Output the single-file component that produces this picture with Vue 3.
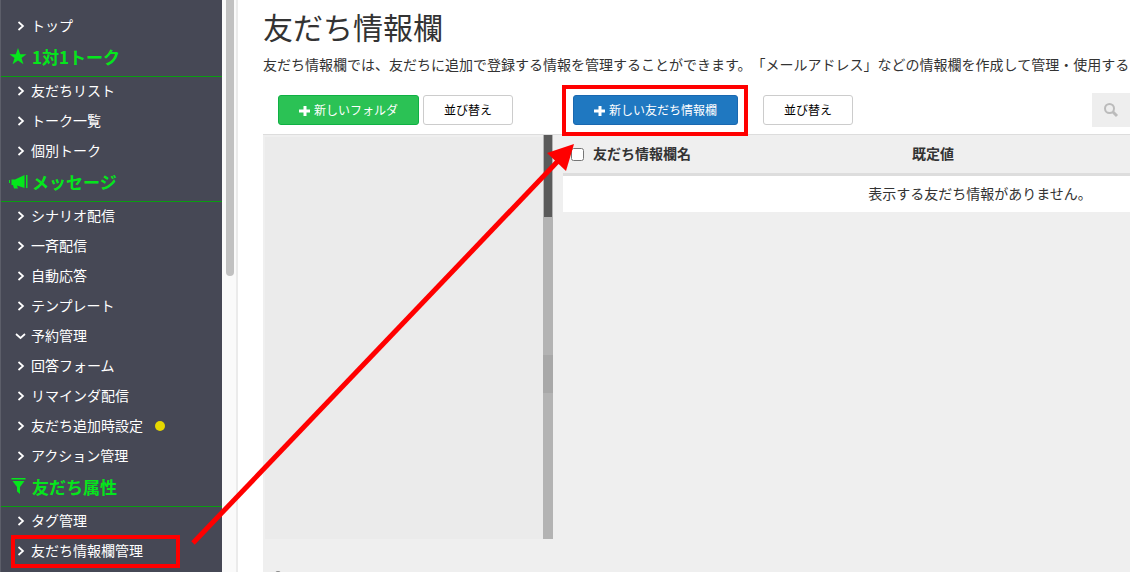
<script setup>
const groups = [
  { items: [{ label: 'トップ' }] },
  {
    title: '1対1トーク',
    icon: 'star',
    items: [{ label: '友だちリスト' }, { label: 'トーク一覧' }, { label: '個別トーク' }],
  },
  {
    title: 'メッセージ',
    icon: 'horn',
    items: [
      { label: 'シナリオ配信' },
      { label: '一斉配信' },
      { label: '自動応答' },
      { label: 'テンプレート' },
      { label: '予約管理', open: true },
      { label: '回答フォーム' },
      { label: 'リマインダ配信' },
      { label: '友だち追加時設定', dot: true },
      { label: 'アクション管理' },
    ],
  },
  {
    title: '友だち属性',
    icon: 'filter',
    items: [{ label: 'タグ管理' }, { label: '友だち情報欄管理', marked: true }],
  },
]
</script>

<template>
  <div class="page">
    <nav class="sidebar">
      <section v-for="(group, i) in groups" :key="i">
        <h2 v-if="group.title" class="group-title">
          <svg v-if="group.icon === 'star'" width="19" height="18" viewBox="0 0 19 18">
            <path fill="currentColor" d="M9 0l2.200 6.200H17.500l-5 3.900 1.900 6.100L9 12.500l-5.400 3.700 1.900-6.100-5-3.900h6.300z" />
          </svg>
          <svg v-else-if="group.icon === 'horn'" width="19" height="18" viewBox="0 0 19 18">
            <path fill="currentColor" d="M0 7h1v3H0zM2.500 6.500H6L15.500 2v13L8 12.500l1 3H5L4 12H2.500zM17 2h1.500v13H17z" />
          </svg>
          <svg v-else width="19" height="18" viewBox="0 0 19 18">
            <path fill="currentColor" d="M2.500 0h14v1.500h-14zM3.500 3h12L11 9v7L8 13.500V9z" />
          </svg>
          <span>{{ group.title }}</span>
        </h2>
        <ul>
          <li v-for="item in group.items" :key="item.label" :class="{ marked: item.marked }">
            <a href="#">
              <svg width="12" height="12" viewBox="0 0 12 12" fill="none" stroke="currentColor" stroke-width="1.700">
                <path v-if="item.open" d="M2 4l4.500 4L11 4" />
                <path v-else d="M4.500 2l4.500 4-4.500 4" />
              </svg>
              <span>{{ item.label }}</span>
              <i v-if="item.dot" class="dot"></i>
            </a>
          </li>
        </ul>
      </section>
    </nav>
    <div class="side-scroll"><div class="side-thumb"></div></div>

    <main>
      <h1>友だち情報欄</h1>
      <p class="lead">友だち情報欄では、友だちに追加で登録する情報を管理することができます。「メールアドレス」などの情報欄を作成して管理・使用することができます。</p>
      <div class="columns">
        <section class="folders">
          <div class="toolbar">
            <button class="btn green" type="button">
              <svg width="12" height="12" viewBox="0 0 12 12"><path fill="currentColor" d="M4.500 1h3v3.500H11v3H7.500V11h-3V7.500H0v-3h4.500z" /></svg>
              新しいフォルダ
            </button>
            <button class="btn" type="button">並び替え</button>
          </div>
          <div class="folder-list">
            <div class="folder-body"></div>
            <div class="folder-scroll"><div class="folder-thumb"></div><div class="folder-grip"></div></div>
          </div>
          <div class="folder-foot"><i></i></div>
        </section>

        <section class="fields">
          <div class="toolbar">
            <span class="highlight">
              <button class="btn blue" type="button">
                <svg width="12" height="12" viewBox="0 0 12 12"><path fill="currentColor" d="M4.500 1h3v3.500H11v3H7.500V11h-3V7.500H0v-3h4.500z" /></svg>
                新しい友だち情報欄
              </button>
            </span>
            <button class="btn" type="button">並び替え</button>
            <button class="search" type="button" aria-label="検索">
              <svg width="16" height="16" viewBox="0 0 16 16" fill="none" stroke="currentColor">
                <circle cx="6.500" cy="6.500" r="4.500" stroke-width="2" />
                <path d="M10 10l4 4" stroke-width="3" />
              </svg>
            </button>
          </div>
          <div class="table-area">
            <table>
              <thead>
                <tr>
                  <th class="name"><label><input type="checkbox" />友だち情報欄名</label></th>
                  <th>既定値</th>
                </tr>
              </thead>
              <tbody>
                <tr><td colspan="2">表示する友だち情報がありません。</td></tr>
              </tbody>
            </table>
          </div>
        </section>
      </div>
    </main>

    <svg class="arrow" width="400" height="410" viewBox="0 0 400 410">
      <path d="M13 403L378 21" stroke="#f00" stroke-width="5" />
      <path d="M394 4L367 13L386 31z" fill="#f00" />
    </svg>
  </div>
</template>

<style>
body {
  overflow: hidden;
}
</style>

<style scoped>
*,
*::after {
  box-sizing: border-box;
}
.page {
  position: relative;
  display: flex;
  height: 100vh;
  overflow: hidden;
  background: #fff;
  color: #333;
  font: 14px/20px "Liberation Sans", "Noto Sans CJK JP", sans-serif;
  text-spacing-trim: space-all;
}
.sidebar {
  flex: 0 0 222px;
  padding-top: 11px;
  background: #464855;
  border-left: 1px solid #5c5e69;
  overflow: hidden;
}
ul {
  margin: 0;
  padding: 0;
  list-style: none;
}
.group-title {
  display: flex;
  align-items: center;
  gap: 4px;
  height: 36px;
  margin: 0 0 -1px;
  padding: 0 0 4px 8px;
  border-bottom: 1px solid #0a9c12;
  color: #05e61c;
  font-family: "Noto Sans CJK JP", sans-serif;
  font-size: 17px;
  line-height: 24px;
}
.group-title svg {
  flex: 0 0 19px;
}
li {
  position: relative;
}
li a {
  display: flex;
  align-items: center;
  height: 30px;
  padding-left: 13px;
  gap: 5px;
  color: #fff;
  text-decoration: none;
}
.dot {
  width: 10px;
  height: 10px;
  margin-left: 7px;
  border-radius: 50%;
  background: #e6d800;
}
.marked::after {
  content: "";
  position: absolute;
  top: -1px;
  left: 10px;
  width: 169px;
  height: 33px;
  border: 4px solid #f00;
}
.side-scroll {
  flex: 0 0 16px;
  padding-left: 4px;
  background: #fafafa;
  border-right: 2px solid #ebebeb;
}
.side-thumb {
  width: 8px;
  height: 276px;
  border-radius: 0 0 4px 4px;
  background: #c1c1c1;
}
main {
  display: flex;
  flex-direction: column;
  flex: 1 0 1160px;
  padding: 9px 0 0 25px;
}
h1 {
  margin: 0;
  font-size: 30px;
  font-weight: 400;
  line-height: 40px;
}
.lead {
  margin: 6px 0 0;
  white-space: nowrap;
}
.columns {
  display: flex;
  flex: 1;
  margin-top: 10px;
}
.folders {
  display: flex;
  flex-direction: column;
  flex: 0 0 290px;
}
.fields {
  display: flex;
  flex-direction: column;
  flex: 1;
}
.toolbar {
  display: flex;
  align-items: center;
  gap: 4px;
  height: 50px;
  padding-left: 15px;
  border-bottom: 1px solid #ddd;
}
.btn {
  display: flex;
  align-items: center;
  gap: 3px;
  height: 30px;
  padding: 2px 20px 0;
  border: 1px solid #ccc;
  border-radius: 3px;
  background: #fff;
  color: #000;
  font: inherit;
  font-size: 12px;
  white-space: nowrap;
}
.green {
  border-color: #0fb043;
  background: #2bc255;
  color: #fff;
}
.blue {
  border-color: #1a68b0;
  background: #1f78c1;
  color: #fff;
}
.fields .toolbar {
  gap: 25px;
  padding-left: 20px;
}
.highlight {
  position: relative;
}
.highlight::after {
  content: "";
  position: absolute;
  inset: -10px -10px -11px -11px;
  border: 4px solid #f00;
}
.search {
  display: flex;
  align-items: center;
  justify-content: center;
  width: 38px;
  height: 34px;
  margin-left: 214px;
  padding: 0;
  border: 0;
  background: #eee;
  color: #bbb;
}
.folder-list {
  display: flex;
  height: 404px;
  padding: 2px 0 0 2px;
  background: #efefef;
}
.folder-body {
  flex: 1;
  background: #ebebeb;
}
.folder-scroll {
  width: 10px;
  margin-top: -2px;
  padding-left: 1px;
  background: #b3b3b3;
}
.folder-thumb {
  width: 8px;
  height: 82px;
  background: #5a5a5a;
}
.folder-grip {
  width: 10px;
  height: 38px;
  margin: 138px 0 0 -1px;
  background: #a8a8a8;
}
.folder-foot {
  flex: 1;
  padding: 32px 0 0 12px;
  background: #efefef;
}
.folder-foot i {
  display: block;
  width: 6px;
  height: 6px;
  border-radius: 50%;
  background: #888;
}
.table-area {
  flex: 1;
  padding-left: 10px;
  background: #efefef;
}
table {
  width: 834px;
  border-collapse: separate;
  border-spacing: 0;
  table-layout: fixed;
}
th {
  height: 41px;
  padding: 0;
  border-bottom: 3px solid #ddd;
  text-align: left;
}
.name {
  width: 349px;
}
.name label {
  display: flex;
  align-items: center;
}
input {
  width: 13px;
  height: 13px;
  margin: 0 9px 0 8px;
}
td {
  height: 36px;
  padding: 0;
  background: #fff;
  text-align: center;
}
.arrow {
  position: absolute;
  top: 140px;
  left: 180px;
}
</style>
